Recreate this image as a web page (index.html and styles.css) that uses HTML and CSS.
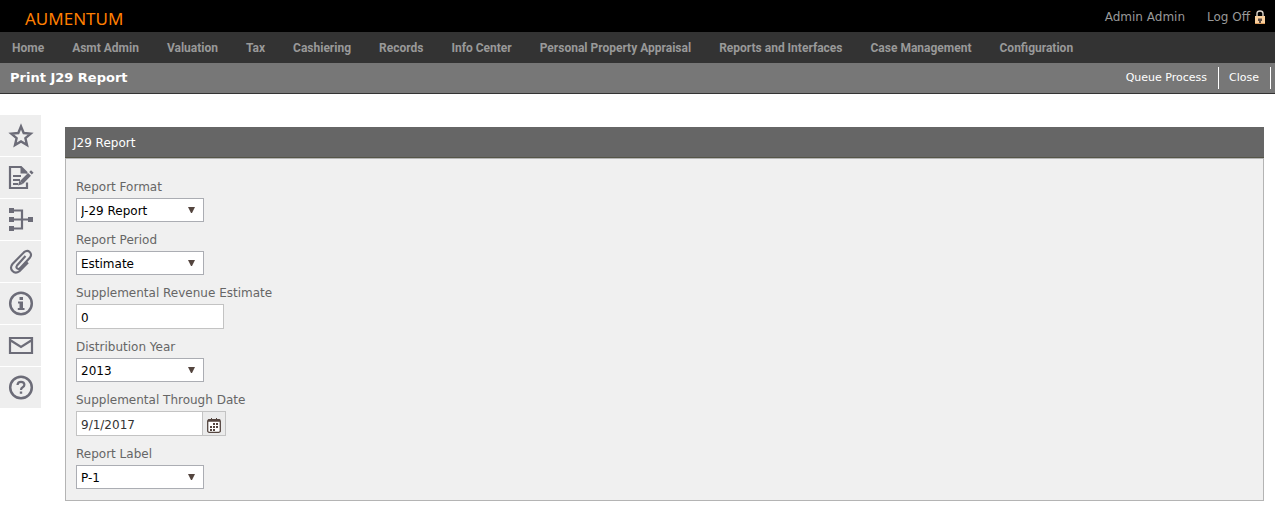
FILE: index.html
```html
<!DOCTYPE html>
<html lang="en">
<head>
<meta charset="utf-8">
<title>Print J29 Report</title>
<link rel="stylesheet" href="styles.css">
</head>
<body>
<header class="topbar">
  <div class="brand">AUMENTUM</div>
  <div class="account">
    <span>Admin Admin</span>
    <a class="logoff" href="#">Log Off
      <svg class="lock" viewBox="0 0 10 14" aria-hidden="true"><path d="M2 7V3.5Q2 1 5 1t3 2.500V7" fill="none" stroke="#ddd5cc" stroke-width="1.4"/><rect y="6" width="10" height="8" fill="#f8cf9d"/><path d="M0 13.5h10" stroke="#d99b5b"/><path d="M3 8.500h4v2.500h-1V13h-2v-2h-1z" fill="#5a4a42"/></svg>
    </a>
  </div>
</header>
<nav class="menu">
  <a href="#">Home</a>
  <a href="#">Asmt Admin</a>
  <a href="#">Valuation</a>
  <a href="#">Tax</a>
  <a href="#">Cashiering</a>
  <a href="#">Records</a>
  <a href="#">Info Center</a>
  <a href="#">Personal Property Appraisal</a>
  <a href="#">Reports and Interfaces</a>
  <a href="#">Case Management</a>
  <a href="#">Configuration</a>
</nav>
<div class="titlebar">
  <h1>Print J29 Report</h1>
  <div class="actions">
    <button type="button">Queue Process</button>
    <button type="button">Close</button>
  </div>
</div>
<div class="content">
  <aside class="tools">
    <button type="button" aria-label="Favorites"><svg viewBox="0 0 26 26"><path d="M13 3.500l2.700 6.500 7 .6-5.300 4.600 1.600 6.800-6-3.600-6 3.600 1.600-6.800-5.300-4.600 7-.6z" stroke-width="2.400"/></svg></button>
    <button type="button" aria-label="Notes"><svg viewBox="0 0 26 26"><path d="M19 17.500V23H2V2h11l6 6" stroke-width="2.200"/><path d="M12.500 1.500v7H20z" class="solid"/><path d="M5 11h8M5 15h7M5 19h5" stroke-width="1.800"/><path d="M13.500 17.500l8-8.200" stroke-width="4"/><path d="M10 20.500l1.500-5 3.500 3.500z" class="solid"/><path d="M22.500 8.300l1.800-1.800" stroke-width="3.600"/></svg></button>
    <button type="button" aria-label="Workflow"><svg viewBox="0 0 26 26"><path d="M4 3.500h10v18H4M3 12.500h20" stroke-width="2.200"/><path d="M1 1h5v5H1zM1 10h5v5H1zM1 19h5v5H1zM20 10h5v5h-5z" class="solid"/></svg></button>
    <button type="button" aria-label="Attachments"><svg viewBox="0 0 26 26"><path d="M17.500 7L9 16.500q-1.300 1.800.2 3t3.300-.7L22 8.500q2.200-3.200-.3-5.500t-5.700.2L4.500 15Q1.500 18.800 4.500 22t7 .2L20 13.500" stroke-width="2.100"/></svg></button>
    <button type="button" aria-label="Information"><svg viewBox="0 0 26 26"><circle cx="13" cy="12.500" r="10.800" stroke-width="2.500"/><path d="M11.500 6h3.500v3h-3.500zM10 10.500h5v6.500h1.500V19H9.800v-2h1.700V12.500H10z" class="solid"/></svg></button>
    <button type="button" aria-label="Mail"><svg viewBox="0 0 26 26"><path d="M2 5h22v15H2zM2 7l11 7 11-7" stroke-width="2.200"/></svg></button>
    <button type="button" aria-label="Help"><svg viewBox="0 0 26 26"><circle cx="13" cy="12.500" r="10.800" stroke-width="2.500"/><path d="M9.500 10Q9.700 6.800 13 6.800t3.400 2.900q0 1.500-1.700 2.500T13 15" stroke-width="2.200"/><path d="M11.800 16.500h2.400v2.300h-2.400z" class="solid"/></svg></button>
  </aside>
  <main class="panel">
    <h2>J29 Report</h2>
    <form class="form">
      <div class="field">
        <label for="format">Report Format</label>
        <select id="format"><option>J-29 Report</option></select>
      </div>
      <div class="field">
        <label for="period">Report Period</label>
        <select id="period"><option>Estimate</option></select>
      </div>
      <div class="field">
        <label for="revenue">Supplemental Revenue Estimate</label>
        <input id="revenue" class="text" type="text" value="0">
      </div>
      <div class="field">
        <label for="year">Distribution Year</label>
        <select id="year"><option>2013</option></select>
      </div>
      <div class="field">
        <label for="through">Supplemental Through Date</label>
        <div class="date">
          <input id="through" type="text" value="9/1/2017">
          <button type="button" aria-label="Open calendar"><svg viewBox="0 0 14 15"><rect x=".7" y="1.700" width="12.600" height="12.600" rx="1.500" fill="#fff" stroke="#54453f" stroke-width="1.300"/><path d="M1 2.500h12" stroke="#54453f" stroke-width="2.500"/><path d="M4.500 0v2M9.500 0v2" stroke="#54453f"/><path d="M6 6h2M9 6h2M3 9h2M6 9h2M9 9h2M3 12h2M6 12h2" stroke="#54453f" stroke-width="2"/></svg></button>
        </div>
      </div>
      <div class="field">
        <label for="label">Report Label</label>
        <select id="label"><option>P-1</option></select>
      </div>
    </form>
  </main>
</div>
</body>
</html>
```
FILE: styles.css
```css
* { box-sizing: border-box; }
body {
  margin: 0;
  background: #fff;
  font: 12px/16px Verdana, "DejaVu Sans", sans-serif;
  color: #000;
}
a { color: inherit; text-decoration: none; }
button, input, select { font: inherit; color: inherit; margin: 0; border-radius: 0; }
button { border: 0; padding: 0; background: none; cursor: pointer; }

.topbar {
  display: flex;
  justify-content: space-between;
  height: 32px;
  padding: 0 10px 0 25px;
  background: #000;
  color: #999;
}
.brand {
  padding-top: 8px;
  font: 17px/22px "Noto Sans", sans-serif;
  color: #ff7f00;
}
.account { display: flex; gap: 22px; padding-top: 9px; }
.logoff { display: flex; gap: 5px; }
.lock { width: 10px; height: 14px; margin-top: 1px; }

.menu {
  display: flex;
  gap: 28px;
  padding: 2px 12px 0;
  background: #333;
  color: #999;
  font: bold 12px/29px "Trebuchet MS", Roboto, sans-serif;
  white-space: nowrap;
}

.titlebar {
  display: flex;
  justify-content: space-between;
  align-items: center;
  height: 31px;
  padding: 0 4px 0 10px;
  border-bottom: 1px solid #333;
  background: #777;
  color: #fff;
}
.titlebar h1 { margin: 0; font-size: 13px; line-height: 16px; }
.actions { display: flex; }
.actions button {
  padding: 0 11px 0 10px;
  border-right: 1px solid #fff;
  font-size: 11px;
  line-height: 22px;
}

.content { display: flex; align-items: flex-start; gap: 24px; padding: 21px 11px 10px 0; }
.tools { display: flex; flex-direction: column; gap: 1px; }
.tools button {
  display: grid;
  place-items: center;
  width: 41px;
  height: 41px;
  background: #eee;
}
.tools svg { width: 26px; height: 26px; fill: none; stroke: #6c6c78; }
.tools .solid { fill: #6c6c78; stroke: none; }

.panel { flex: 1; margin-top: 12px; }
.panel h2 {
  margin: 0;
  padding: 2px 8px 0;
  border-bottom: 1px solid #555548;
  background: #666;
  color: #fff;
  font-size: 12px;
  font-weight: normal;
  line-height: 28px;
}
.form {
  display: flex;
  flex-direction: column;
  align-items: flex-start;
  gap: 10px;
  padding: 20px 10px 11px;
  border: 1px solid #b4b4b4;
  background: #f0f0f0;
}
.field label { display: block; margin-bottom: 3px; color: #666; }
select {
  display: block;
  appearance: none;
  width: 128px;
  height: 24px;
  padding: 2px 20px 0 4px;
  border: 1px solid #abadb3;
  background: #fff url("data:image/svg+xml,%3Csvg xmlns='http://www.w3.org/2000/svg' width='7' height='6'%3E%3Cpath d='M0 0h7L4 6H3z' fill='%2354453f'/%3E%3C/svg%3E") no-repeat right 8px center;
}
.text {
  display: block;
  width: 148px;
  height: 25px;
  padding: 2px 4px 0;
  border: 1px solid #c3c3c3;
}
.date { display: flex; width: 150px; height: 25px; border: 1px solid #c3c3c3; background: #fff; color: #333; }
.date input { flex: 1; min-width: 0; padding: 2px 4px 0; border: 0; background: none; }
.date button {
  display: grid;
  place-items: center;
  width: 23px;
  padding-top: 3px;
  border-left: 1px solid #c3c3c3;
  background: #ebebeb;
}
.date svg { width: 14px; height: 15px; }
```
